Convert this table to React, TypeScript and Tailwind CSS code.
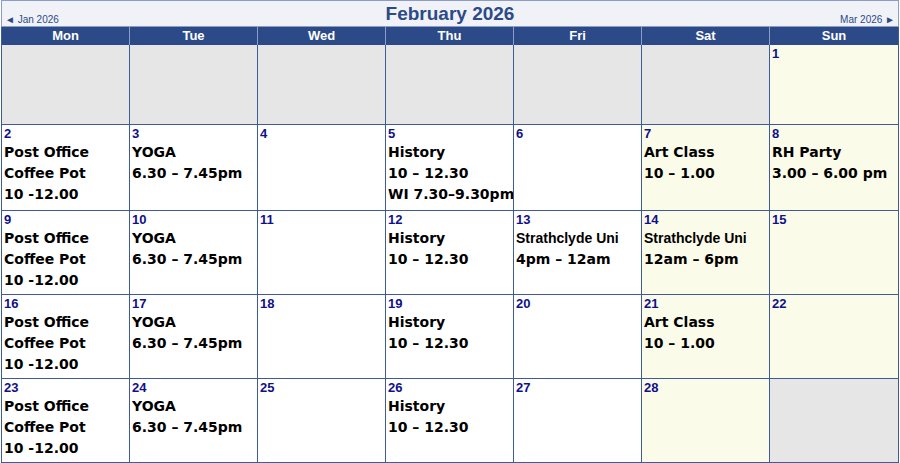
const days = ["Mon", "Tue", "Wed", "Thu", "Fri", "Sat", "Sun"];

type Cell = { n?: number; lines?: string[] };

const weeks: Cell[][] = [
  [{}, {}, {}, {}, {}, {}, { n: 1 }],
  [
    { n: 2, lines: ["Post Office", "Coffee Pot", "10 -12.00"] },
    { n: 3, lines: ["YOGA", "6.30 – 7.45pm"] },
    { n: 4 },
    { n: 5, lines: ["History", "10 – 12.30", "WI 7.30–9.30pm"] },
    { n: 6 },
    { n: 7, lines: ["Art Class", "10 – 1.00"] },
    { n: 8, lines: ["RH Party", "3.00 – 6.00 pm"] },
  ],
  [
    { n: 9, lines: ["Post Office", "Coffee Pot", "10 -12.00"] },
    { n: 10, lines: ["YOGA", "6.30 – 7.45pm"] },
    { n: 11 },
    { n: 12, lines: ["History", "10 – 12.30"] },
    { n: 13, lines: ["Strathclyde Uni", "4pm – 12am"] },
    { n: 14, lines: ["Strathclyde Uni", "12am – 6pm"] },
    { n: 15 },
  ],
  [
    { n: 16, lines: ["Post Office", "Coffee Pot", "10 -12.00"] },
    { n: 17, lines: ["YOGA", "6.30 – 7.45pm"] },
    { n: 18 },
    { n: 19, lines: ["History", "10 – 12.30"] },
    { n: 20 },
    { n: 21, lines: ["Art Class", "10 – 1.00"] },
    { n: 22 },
  ],
  [
    { n: 23, lines: ["Post Office", "Coffee Pot", "10 -12.00"] },
    { n: 24, lines: ["YOGA", "6.30 – 7.45pm"] },
    { n: 25 },
    { n: 26, lines: ["History", "10 – 12.30"] },
    { n: 27 },
    { n: 28 },
    {},
  ],
];

const rowHeights = ["h-[80px]", "h-[86px]", "h-[84px]", "h-[84px]", "h-[83px]"];

const App = () => {
  return (
    <div className="w-[900px] h-[463px] bg-white font-['Liberation_Sans',Arial,sans-serif]">
      <div className="ml-[1px] w-[898px] border border-[#8b9cc6] bg-[#f0f2f7] h-[27px] flex items-end justify-between px-[3px] relative">
        <span className="text-[10px] leading-[12px] text-[#2c4a87]">◄ Jan 2026</span>
        <span className="absolute left-0 right-0 top-0 text-center text-[19px] leading-[26px] font-bold text-[#2c4a87]">
          February 2026
        </span>
        <span className="text-[10px] leading-[12px] text-[#2c4a87]">Mar 2026 ►</span>
      </div>
      <div className="ml-[1px] w-[898px] border-x border-b border-[#3e5a98]">
        <div className="grid grid-cols-7 bg-[#2c4a87] h-[18px]">
          {days.map((d, i) => (
            <div
              key={d}
              className={`text-center text-white font-bold text-[13px] leading-[18px] ${i < 6 ? "border-r border-[#8b9cc6]" : ""}`}
            >
              {d}
            </div>
          ))}
        </div>
        {weeks.map((week, wi) => (
          <div key={wi} className={`grid grid-cols-7 ${rowHeights[wi]} ${wi < 4 ? "border-b border-[#3e5a98]" : ""}`}>
            {week.map((c, ci) => {
              const bg = !c.n ? "bg-[#e6e6e6]" : ci >= 5 ? "bg-[#fbfbe9]" : "bg-white";
              return (
                <div
                  key={ci}
                  className={`${bg} ${ci < 6 ? "border-r border-[#3e5a98]" : ""} pl-[2px] pt-[1px] overflow-hidden`}
                >
                  {c.n && (
                    <div className="text-[13px] leading-[16px] font-bold text-[#10108a]">{c.n}</div>
                  )}
                  {c.lines?.map((l) => (
                    <div
                      key={l}
                      className={`leading-[21px] text-[14px] font-bold text-black whitespace-nowrap ${
                        l === "Strathclyde Uni"
                          ? "font-['Liberation_Sans',Arial,sans-serif]"
                          : "font-['DejaVu_Sans',sans-serif]"
                      }`}
                    >
                      {l}
                    </div>
                  ))}
                </div>
              );
            })}
          </div>
        ))}
      </div>
    </div>
  );
};

export default App;
